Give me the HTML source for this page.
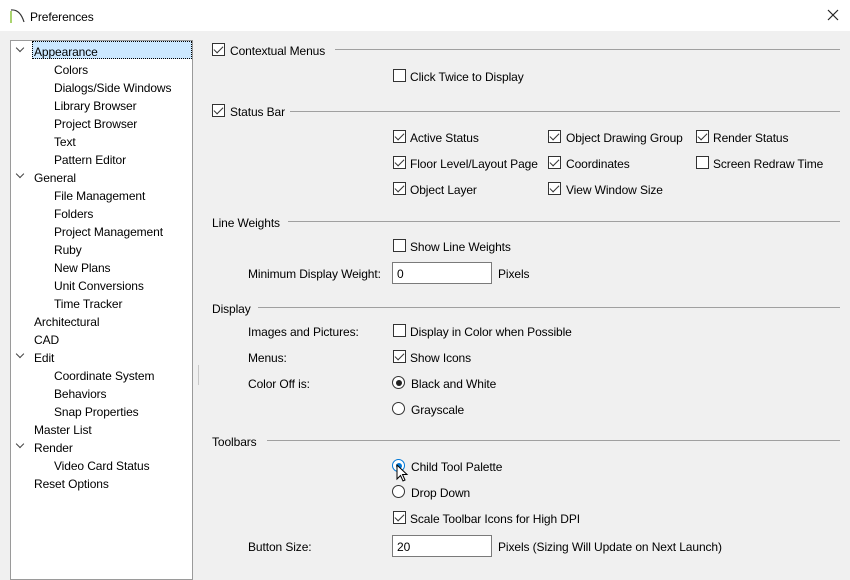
<!DOCTYPE html>
<html><head><style>
*{margin:0;padding:0;box-sizing:border-box}
body{width:850px;height:569px;background:#f0f0f0;font-family:"Liberation Sans",sans-serif;font-size:12px;color:#000;position:relative;overflow:hidden}
.a{position:absolute;white-space:nowrap;line-height:14px;margin-top:1px;letter-spacing:-0.1px}
.cb{position:absolute;width:13px;height:13px;border:1px solid #333;background:#fff}
.cb.c::after{content:"";position:absolute;left:3px;top:0px;width:4px;height:8px;border:solid #333;border-width:0 1.5px 1.5px 0;transform:rotate(45deg)}
.rb{position:absolute;width:13px;height:13px;border:1px solid #333;border-radius:50%;background:#fff}
.rb.c::after{content:"";position:absolute;left:2.5px;top:2.5px;width:6px;height:6px;border-radius:50%;background:#222}
.rb.b{border-color:#0078d7}.rb.b::after{background:#0078d7}
.ln{position:absolute;height:1px;background:#a0a0a0;right:10px}
.inp{position:absolute;width:100px;height:22px;border:1px solid #7a7a7a;background:#fff;padding:4px 4px;line-height:14px}
.chev{position:absolute;width:6px;height:6px;border:solid #444;border-width:0 1.5px 1.5px 0;transform:rotate(45deg)}
</style></head><body>
<div style="position:absolute;left:0;top:0;width:850px;height:31px;background:#fff"></div>
<svg style="position:absolute;left:8px;top:6px" width="18" height="18"><path d="M3 4 Q12 3 16 16" stroke="#333" fill="none" stroke-width="1.2"/><path d="M3 17V5" stroke="#8dc63f" stroke-width="1.5"/></svg>
<div class="a" style="left:30px;top:9px">Preferences</div>
<svg style="position:absolute;left:827px;top:9px" width="12" height="12"><path d="M1 1L11 11M11 1L1 11" stroke="#222" stroke-width="1.2"/></svg>
<div style="position:absolute;left:10px;top:40px;width:183px;height:540px;background:#fff;border:1px solid #9a9a9a"></div>
<div style="position:absolute;left:32px;top:41px;width:160px;height:18px;background:#cce8ff;border:1px dotted #000"></div>
<div class="chev" style="left:17px;top:45px"></div>
<div class="chev" style="left:17px;top:171px"></div>
<div class="chev" style="left:17px;top:351px"></div>
<div class="chev" style="left:17px;top:441px"></div>
<div class="a" style="left:34px;top:44px">Appearance</div>
<div class="a" style="left:54px;top:62px">Colors</div>
<div class="a" style="left:54px;top:80px">Dialogs/Side Windows</div>
<div class="a" style="left:54px;top:98px">Library Browser</div>
<div class="a" style="left:54px;top:116px">Project Browser</div>
<div class="a" style="left:54px;top:134px">Text</div>
<div class="a" style="left:54px;top:152px">Pattern Editor</div>
<div class="a" style="left:34px;top:170px">General</div>
<div class="a" style="left:54px;top:188px">File Management</div>
<div class="a" style="left:54px;top:206px">Folders</div>
<div class="a" style="left:54px;top:224px">Project Management</div>
<div class="a" style="left:54px;top:242px">Ruby</div>
<div class="a" style="left:54px;top:260px">New Plans</div>
<div class="a" style="left:54px;top:278px">Unit Conversions</div>
<div class="a" style="left:54px;top:296px">Time Tracker</div>
<div class="a" style="left:34px;top:314px">Architectural</div>
<div class="a" style="left:34px;top:332px">CAD</div>
<div class="a" style="left:34px;top:350px">Edit</div>
<div class="a" style="left:54px;top:368px">Coordinate System</div>
<div class="a" style="left:54px;top:386px">Behaviors</div>
<div class="a" style="left:54px;top:404px">Snap Properties</div>
<div class="a" style="left:34px;top:422px">Master List</div>
<div class="a" style="left:34px;top:440px">Render</div>
<div class="a" style="left:54px;top:458px">Video Card Status</div>
<div class="a" style="left:34px;top:476px">Reset Options</div>
<div style="position:absolute;left:198px;top:365px;width:1px;height:20px;background:#c8c8c8"></div>

<div class="cb c" style="left:212px;top:43px"></div><div class="a" style="left:230px;top:43px">Contextual Menus</div><div class="ln" style="left:335px;top:49px"></div>
<div class="cb" style="left:393px;top:69px"></div><div class="a" style="left:410px;top:69px">Click Twice to Display</div>
<div class="cb c" style="left:212px;top:104px"></div><div class="a" style="left:230px;top:104px">Status Bar</div><div class="ln" style="left:290px;top:111px"></div>
<div class="cb c" style="left:393px;top:130px"></div><div class="a" style="left:410px;top:130px">Active Status</div>
<div class="cb c" style="left:548px;top:130px"></div><div class="a" style="left:566px;top:130px">Object Drawing Group</div>
<div class="cb c" style="left:696px;top:130px"></div><div class="a" style="left:713px;top:130px">Render Status</div>
<div class="cb c" style="left:393px;top:156px"></div><div class="a" style="left:410px;top:156px">Floor Level/Layout Page</div>
<div class="cb c" style="left:548px;top:156px"></div><div class="a" style="left:566px;top:156px">Coordinates</div>
<div class="cb" style="left:696px;top:156px"></div><div class="a" style="left:713px;top:156px">Screen Redraw Time</div>
<div class="cb c" style="left:393px;top:182px"></div><div class="a" style="left:410px;top:182px">Object Layer</div>
<div class="cb c" style="left:548px;top:182px"></div><div class="a" style="left:566px;top:182px">View Window Size</div>
<div class="a" style="left:212px;top:215px">Line Weights</div><div class="ln" style="left:288px;top:221px"></div>
<div class="cb" style="left:393px;top:239px"></div><div class="a" style="left:410px;top:239px">Show Line Weights</div>
<div class="a" style="left:248px;top:266px">Minimum Display Weight:</div><div class="inp" style="left:392px;top:262px">0</div><div class="a" style="left:498px;top:266px">Pixels</div>
<div class="a" style="left:212px;top:301px">Display</div><div class="ln" style="left:258px;top:307px"></div>
<div class="a" style="left:248px;top:324px">Images and Pictures:</div><div class="cb" style="left:393px;top:324px"></div><div class="a" style="left:410px;top:324px">Display in Color when Possible</div>
<div class="a" style="left:248px;top:350px">Menus:</div><div class="cb c" style="left:393px;top:350px"></div><div class="a" style="left:410px;top:350px">Show Icons</div>
<div class="a" style="left:248px;top:376px">Color Off is:</div><div class="rb c" style="left:392px;top:376px"></div><div class="a" style="left:411px;top:376px">Black and White</div>
<div class="rb" style="left:392px;top:402px"></div><div class="a" style="left:411px;top:402px">Grayscale</div>
<div class="a" style="left:212px;top:434px">Toolbars</div><div class="ln" style="left:267px;top:440px"></div>
<div class="rb c b" style="left:392px;top:459px"></div><div class="a" style="left:411px;top:459px">Child Tool Palette</div>
<svg style="position:absolute;left:396px;top:464px" width="14" height="20"><path d="M1 1V15L4.5 11.5L7 17L9 16L6.5 10.5H11Z" fill="#fff" stroke="#000" stroke-width="1"/></svg>
<div class="rb" style="left:392px;top:485px"></div><div class="a" style="left:411px;top:485px">Drop Down</div>
<div class="cb c" style="left:393px;top:511px"></div><div class="a" style="left:410px;top:511px">Scale Toolbar Icons for High DPI</div>
<div class="a" style="left:248px;top:539px">Button Size:</div><div class="inp" style="left:392px;top:535px">20</div><div class="a" style="left:498px;top:539px">Pixels (Sizing Will Update on Next Launch)</div>
</body></html>
